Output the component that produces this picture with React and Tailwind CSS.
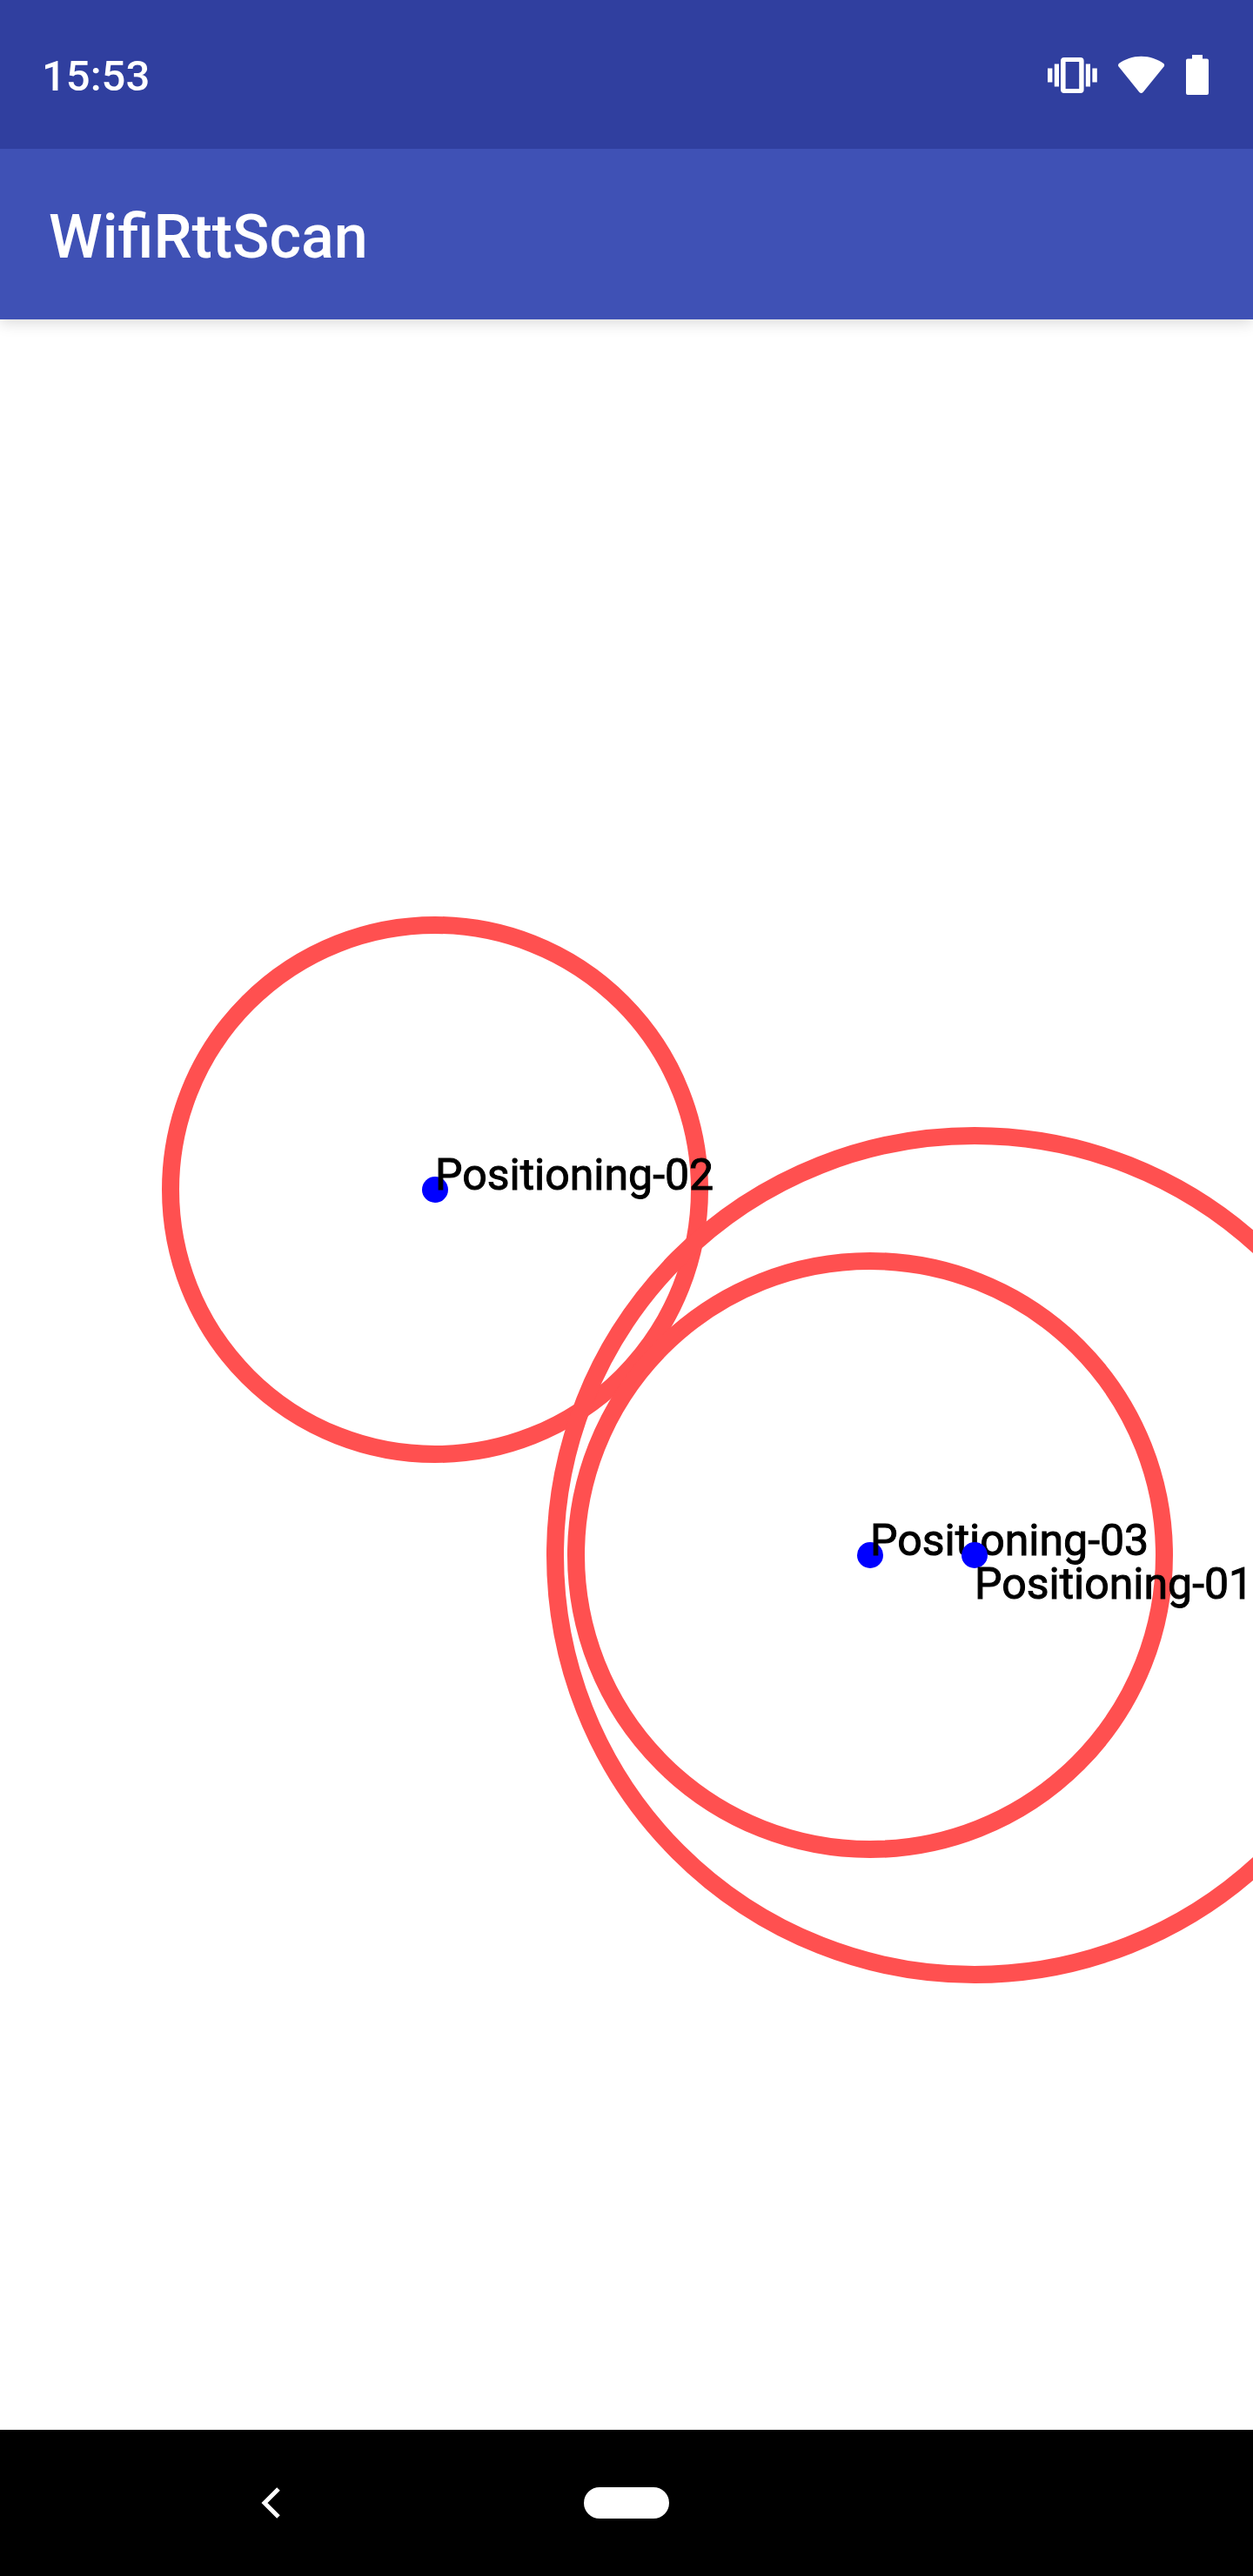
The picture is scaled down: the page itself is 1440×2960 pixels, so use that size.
const anchors = [
  { name: "Positioning-02", x: 500, y: 1000, radius: 304, labelDrop: 0 },
  { name: "Positioning-03", x: 1000, y: 1420, radius: 338, labelDrop: 0 },
  { name: "Positioning-01", x: 1120, y: 1420, radius: 482, labelDrop: 50 },
];

function VibrateIcon() {
  return (
    <svg className="h-[46px] w-[57px]" viewBox="0 0 57 46" fill="currentColor" aria-hidden="true">
      <rect x="0" y="15.5" width="5.4" height="16" />
      <rect x="7.8" y="10.5" width="5.2" height="26" />
      <rect x="43.8" y="10.5" width="5.2" height="26" />
      <rect x="51.4" y="15.5" width="5.4" height="16" />
      <path
        fillRule="evenodd"
        d="M19 3h18.600a4 4 0 0 1 4 4v33a4 4 0 0 1-4 4H19a4 4 0 0 1-4-4V7a4 4 0 0 1 4-4zM20.600 8v31h15.600V8z"
      />
    </svg>
  );
}

function WifiIcon() {
  return (
    <svg className="h-[46px] w-[54px]" viewBox="0 0 54 46" fill="currentColor" aria-hidden="true">
      <path d="M26.500 1.700C36.500 1.700 45 5 52 9.800Q54 11.600 52.600 13.500L28.600 43Q26.500 45.200 24.400 43L.6 13.500Q-.8 11.600 1.200 9.800C8 5 16.500 1.700 26.500 1.700z" />
    </svg>
  );
}

function BatteryIcon() {
  return (
    <svg className="h-[46px] w-[26px]" viewBox="0 0 26 46" fill="currentColor" aria-hidden="true">
      <path d="M7 0h12v4.500h5a2 2 0 0 1 2 2V44a2 2 0 0 1-2 2H2a2 2 0 0 1-2-2V6.500a2 2 0 0 1 2-2h5z" />
    </svg>
  );
}

function RangeMap() {
  return (
    <svg className="block w-full flex-1" role="img" aria-label="Ranges to access points">
      {anchors.map((a) => (
        <g key={a.name}>
          <circle cx={a.x} cy={a.y} r={a.radius} fill="none" stroke="#ff5050" strokeWidth="20" />
          <circle cx={a.x} cy={a.y} r="15" fill="#0000ff" />
          <text x={a.x} y={a.y + a.labelDrop} className="fill-black stroke-black stroke-1 text-[50px]">
            {a.name}
          </text>
        </g>
      ))}
    </svg>
  );
}

export default function App() {
  return (
    <div className="flex min-h-screen flex-col overflow-x-hidden bg-white font-['Roboto',sans-serif]">
      <div className="z-20 flex h-[171px] items-center justify-between bg-[#303f9f] pr-[51px] pl-12 text-white">
        <time className="pt-1 text-[49px] font-medium">15:53</time>
        <div className="flex items-center gap-6">
          <VibrateIcon />
          <WifiIcon />
          <BatteryIcon />
        </div>
      </div>
      <header className="z-10 flex h-[196px] items-center bg-[#3f51b5] px-14 pt-1.5 shadow-[0_4px_16px_rgba(0,0,0,0.15)]">
        <h1 className="text-[70px] font-medium text-white">WifiRttScan</h1>
      </header>
      <main className="flex flex-1 flex-col">
        <RangeMap />
      </main>
      <nav className="grid h-[168px] grid-cols-[1fr_auto_1fr] items-center bg-black text-white">
        <button type="button" aria-label="Back" className="ml-[300px] w-6">
          <svg className="h-9 w-6" viewBox="0 0 24 36" fill="none" stroke="currentColor" strokeWidth="5" aria-hidden="true">
            <path d="M20 2L4 18l16 16" />
          </svg>
        </button>
        <button type="button" aria-label="Home" className="h-9 w-[98px] rounded-full bg-white" />
      </nav>
    </div>
  );
}
